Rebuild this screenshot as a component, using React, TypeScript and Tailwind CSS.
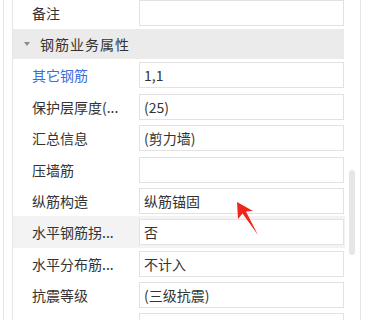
import React from "react";

type Row = { label: string; value: string; h: string; blue?: boolean; hl?: boolean };

const rows: Row[] = [
  { label: "其它钢筋", value: "1,1", h: "h-[32px]", blue: true },
  { label: "保护层厚度(...", value: "(25)", h: "h-[31px]" },
  { label: "汇总信息", value: "(剪力墙)", h: "h-[32px]" },
  { label: "压墙筋", value: "", h: "h-[31px]" },
  { label: "纵筋构造", value: "纵筋锚固", h: "h-[31px]" },
  { label: "水平钢筋拐...", value: "否", h: "h-[32px]", hl: true },
  { label: "水平分布筋...", value: "不计入", h: "h-[31px]" },
  { label: "抗震等级", value: "(三级抗震)", h: "h-[31px]" },
  { label: "锚固搭接", value: "(按默认锚固搭接计算)", h: "h-[31px]" },
];

function PropRow({ row }: { row: Row }) {
  return (
    <div className={`flex ${row.h} ${row.hl ? "bg-[#f3f3f3]" : ""}`}>
      <div
        className={`flex h-[32px] w-[126px] items-center pl-[19px] pt-[1px] text-[14px] ${
          row.blue ? "text-[#3b6fe0]" : "text-[#333]"
        }`}
      >
        <span className="whitespace-nowrap">{row.label}</span>
      </div>
      <div className="mt-[3px] flex h-[26px] w-[205px] items-center border border-[#e2e2e2] bg-white pl-[4px] text-[14px] text-[#333]">
        <span className="whitespace-nowrap">{row.value}</span>
      </div>
    </div>
  );
}

export default function App() {
  return (
    <div
      className="relative flex h-[320px] w-[366px] overflow-hidden bg-white"
      style={{ fontFamily: '"Noto Sans CJK SC", "Noto Sans", sans-serif' }}
    >
      <div className="ml-[3px] w-px bg-[#e4e4e4]" />

      {/* property panel */}
      <div className="ml-[8px] w-[333px] border-l border-[#e6e6e6]">
        <div className="flex h-[29px]">
          <div className="flex h-[26px] w-[126px] items-center pl-[19px] text-[14px] text-[#333]">
            备注
          </div>
          <div className="h-[26px] w-[205px] border border-[#e2e2e2] bg-white" />
        </div>

        <div className="flex h-[30px] w-[331px] items-center bg-[#ebebeb] text-[14px] text-[#333]">
          <svg width="6" height="4" viewBox="0 0 6 4" className="ml-[11px]">
            <path d="M0 0 L6 0 L3 4 Z" fill="#8a8a8a" />
          </svg>
          <span className="ml-[10px] tracking-[1px]">钢筋业务属性</span>
        </div>

        {rows.map((r) => (
          <PropRow key={r.label} row={r} />
        ))}
      </div>

      {/* scrollbar */}
      <div className="ml-[4px] w-[6px]">
        <div className="mt-[170px] h-[85px] rounded-[3px] bg-[#e6e6e6]" />
      </div>
      <div className="ml-[5px] w-px bg-[#e4e4e4]" />

      {/* red annotation arrow */}
      <svg
        className="absolute left-[230px] top-[198px]"
        width="34"
        height="42"
        viewBox="0 0 34 42"
      >
        <path d="M7 4 L8 21 L12.5 15.5 L28 37 L16 13.5 L23 13 Z" fill="#f0261c" />
      </svg>
    </div>
  );
}
